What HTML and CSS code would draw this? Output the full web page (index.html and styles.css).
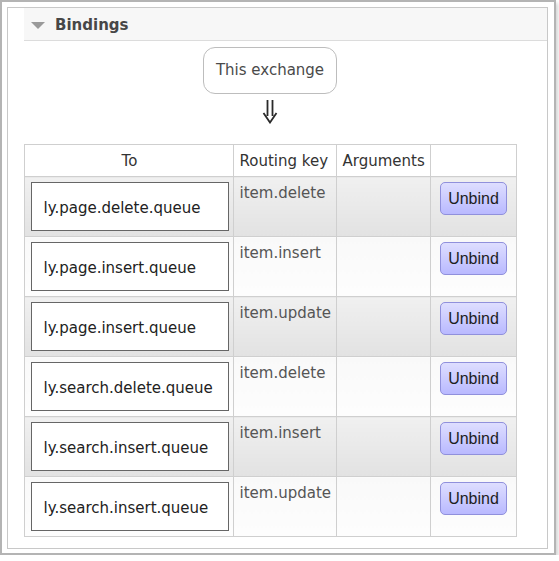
FILE: index.html
```html
<!DOCTYPE html>
<html>
<head>
<meta charset="utf-8">
<link rel="stylesheet" href="styles.css">
</head>
<body>
<div class="window">
  <div class="panel">
    <h2 class="panel-title"><span class="tri"></span>Bindings</h2>
    <div class="bindings">
      <div class="source">This exchange</div>
      <svg class="arrow" width="16" height="24" viewBox="0 0 16 24" aria-label="down">
        <path d="M5.5 0 V16 M10.5 0 V16 M1.5 13 L8 22.5 L14.5 13" fill="none" stroke="#2a2a2a" stroke-width="1.8"/>
      </svg>
      <table class="grid">
        <colgroup>
          <col class="c-to"><col class="c-key"><col class="c-args"><col class="c-act">
        </colgroup>
        <thead>
          <tr><th class="center">To</th><th>Routing key</th><th>Arguments</th><th></th></tr>
        </thead>
        <tbody>
          <tr class="alt1"><td><span class="dest">ly.page.delete.queue</span></td><td class="key">item.delete</td><td></td><td class="act"><button class="btn">Unbind</button></td></tr>
          <tr class="alt0"><td><span class="dest">ly.page.insert.queue</span></td><td class="key">item.insert</td><td></td><td class="act"><button class="btn">Unbind</button></td></tr>
          <tr class="alt1"><td><span class="dest">ly.page.insert.queue</span></td><td class="key">item.update</td><td></td><td class="act"><button class="btn">Unbind</button></td></tr>
          <tr class="alt0"><td><span class="dest">ly.search.delete.queue</span></td><td class="key">item.delete</td><td></td><td class="act"><button class="btn">Unbind</button></td></tr>
          <tr class="alt1"><td><span class="dest">ly.search.insert.queue</span></td><td class="key">item.insert</td><td></td><td class="act"><button class="btn">Unbind</button></td></tr>
          <tr class="alt0"><td><span class="dest">ly.search.insert.queue</span></td><td class="key">item.update</td><td></td><td class="act"><button class="btn">Unbind</button></td></tr>
        </tbody>
      </table>
    </div>
  </div>
</div>
</body>
</html>
```

FILE: styles.css
```css
html, body {
  margin: 0;
  padding: 0;
  background: #fff;
}
body {
  font-family: "DejaVu Sans", Verdana, sans-serif;
  font-size: 15px;
  color: #444;
}
.window {
  width: 541px;
  padding: 5px 6px 4px 5px;
  border: 2px solid #b4b4b4;
  box-shadow: 2px 3px 4px rgba(0, 0, 0, 0.18);
  background: #fff;
}
.panel {
  border: 1px solid #c8c8c8;
  padding: 0 0 11px 16px;
}
.panel-title {
  margin: 0;
  box-sizing: border-box;
  height: 33px;
  padding-top: 3px;
  line-height: 29px;
  border-bottom: 1px solid #dcdcdc;
  background: #f7f7f7;
  font-size: 15px;
  font-weight: bold;
  color: #474747;
  display: flex;
  align-items: center;
}
.tri {
  width: 0;
  height: 0;
  border-left: 7px solid transparent;
  border-right: 7px solid transparent;
  border-top: 7px solid #9a9a9a;
  margin: 0 10px 0 7px;
}
.bindings {
  width: 492px;
  display: flex;
  flex-direction: column;
  align-items: center;
}
.source {
  margin-top: 6px;
  padding: 14px 12px;
  line-height: 17px;
  border: 1px solid #bdbdbd;
  border-radius: 12px;
  color: #4a4a4a;
}
.arrow {
  display: block;
  margin: 6px 0 20px;
}
.grid {
  width: 492px;
  table-layout: fixed;
  border-collapse: collapse;
}
.c-to { width: 209px; }
.c-key { width: 103px; }
.c-args { width: 94px; }
.c-act { width: 86px; }
.grid th, .grid td {
  border: 1px solid #cfcfcf;
  padding: 5px 4px 5px 6px;
  vertical-align: top;
  text-align: left;
}
.grid th {
  font-weight: normal;
  color: #333;
  line-height: 20px;
  padding-top: 6px;
  padding-bottom: 5px;
  background: #fff;
}
.grid th.center { text-align: center; }
.alt1 td { background: linear-gradient(#f0f0f0, #e2e2e2); }
.alt0 td { background: linear-gradient(#f9f9f9, #fdfdfd); }
.dest {
  display: block;
  box-sizing: border-box;
  width: 198px;
  height: 49px;
  border: 1px solid #666;
  background: #fff;
  padding: 16px 0 0 12px;
  line-height: 18px;
  color: #222;
  white-space: nowrap;
}
.key {
  color: #555;
  line-height: 18px;
  padding-top: 7px !important;
}
.act {
  text-align: center !important;
  padding-left: 6px !important;
  padding-right: 5px !important;
}
.btn {
  font-family: "Liberation Sans", Arial, sans-serif;
  font-size: 16px;
  line-height: 19px;
  color: #1e1e1e;
  padding: 6px 7px;
  border: 1px solid #9090dc;
  border-radius: 5px;
  background: linear-gradient(#dedeff, #b9b9ff);
  cursor: pointer;
}
```
